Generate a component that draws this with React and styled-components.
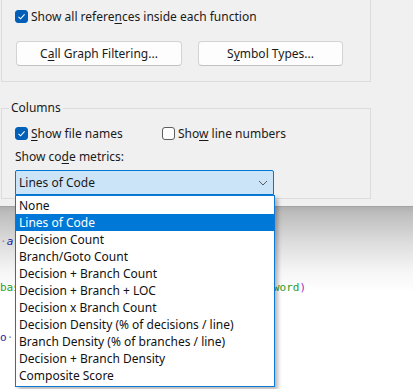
import React from 'react';
import styled, { createGlobalStyle } from 'styled-components';

const GlobalStyle = createGlobalStyle`
  html, body { margin: 0; padding: 0; background: #ffffff; }
  body { font-family: "Noto Sans", "Segoe UI", sans-serif; font-size: 12px; color: #1a1a1a; }
`;

const Page = styled.div`
  position: relative;
  width: 413px;
  height: 389px;
  overflow: hidden;
  display: flex;
  flex-direction: column;
`;

const Dialog = styled.div`
  height: 206px;
  background: #f0f0f0;
  border-bottom: 1px solid #a3a3a3;
  padding-left: 1px;
  display: flex;
  flex-direction: column;
`;

const Group = styled.div`
  position: relative;
  width: 355px;
  border: 1px solid #dcdcdc;
  box-sizing: content-box;
  margin-top: ${p => p.$top}px;
  height: ${p => p.$height}px;
  padding-left: 13px;
`;

const Legend = styled.div`
  position: absolute;
  left: 7px;
  top: -10px;
  padding: 0 2px;
  background: #f0f0f0;
  line-height: 17px;
`;

const CheckRow = styled.div`
  display: flex;
  align-items: center;
  height: 17px;
  margin-top: ${p => p.$top || 0}px;
`;

const CheckItem = styled.label`
  display: flex;
  align-items: center;
  gap: 3px;
  width: ${p => (p.$width ? `${p.$width}px` : 'auto')};
`;

const Box = styled.span`
  width: 13px;
  height: 13px;
  box-sizing: border-box;
  border-radius: 3px;
  display: inline-flex;
  align-items: center;
  justify-content: center;
  background: ${p => (p.$checked ? '#005fb8' : '#fdfdfd')};
  border: 1px solid ${p => (p.$checked ? '#005fb8' : '#5d5d5d')};
`;

const U = styled.span`
  text-decoration: underline;
  text-underline-offset: 2px;
`;

const ButtonRow = styled.div`
  display: flex;
  gap: 16px;
  margin-top: 16px;
  padding-left: 1px;
`;

const Button = styled.div`
  width: ${p => p.$width}px;
  height: 25px;
  box-sizing: border-box;
  background: #fdfdfd;
  border: 1px solid #d3d3d3;
  border-bottom-color: #c2c2c2;
  border-radius: 4px;
  display: flex;
  align-items: center;
  justify-content: center;
`;

const Label = styled.div`
  margin-top: 6px;
  line-height: 17px;
`;

const Combo = styled.div`
  margin-top: 5px;
  width: 259px;
  height: 25px;
  box-sizing: border-box;
  background: #cce4f7;
  border: 1px solid #0078d4;
  border-radius: 2px 2px 0 0;
  display: flex;
  align-items: center;
  justify-content: space-between;
  padding: 0 5px 0 3px;
`;

const Editor = styled.div`
  flex: 1;
  background: linear-gradient(#b0b0b0 0px, #bdbdbd 6px, #dcdcdc 35px, #f6f6f6 65px, #ffffff 85px);
  font-family: "DejaVu Sans Mono", "Liberation Mono", monospace;
  font-size: 11px;
`;

const CodeLine = styled.div`
  position: relative;
  height: 16px;
  line-height: 16px;
  margin-top: ${p => p.$top}px;
  white-space: pre;
`;

const Tok = styled.span`
  color: ${p => p.$c};
  font-style: ${p => (p.$italic ? 'italic' : 'normal')};
`;

const Right = styled.span`
  position: absolute;
  left: ${p => p.$left}px;
`;

const List = styled.div`
  position: absolute;
  left: 15px;
  top: 195px;
  width: 260px;
  box-sizing: border-box;
  background: #ffffff;
  border: 1px solid #0f78d4;
  box-shadow: 3px 3px 4px rgba(0, 0, 0, 0.28);
  padding: 1px 0 2px;
`;

const Item = styled.div`
  height: 17px;
  line-height: 17px;
  padding-left: 3px;
  color: ${p => (p.$selected ? '#ffffff' : '#111111')};
  background: ${p => (p.$selected ? '#0078d7' : 'transparent')};
`;

const Check = () => (
  <svg width="9" height="9" viewBox="0 0 9 9">
    <path d="M1.5 4.8 L3.6 6.8 L7.6 2.4" fill="none" stroke="#ffffff" strokeWidth="1.1" />
  </svg>
);

const Chevron = () => (
  <svg width="10" height="6" viewBox="0 0 10 6">
    <path d="M1 1 L5 5 L9 1" fill="none" stroke="#5a5a5a" strokeWidth="1" />
  </svg>
);

const items = [
  'None',
  'Lines of Code',
  'Decision Count',
  'Branch/Goto Count',
  'Decision + Branch Count',
  'Decision + Branch + LOC',
  'Decision x Branch Count',
  'Decision Density (% of decisions / line)',
  'Branch Density (% of branches / line)',
  'Decision + Branch Density',
  'Composite Score',
];

export default function App() {
  return (
    <Page>
      <GlobalStyle />
      <Dialog>
        <Group $top={-20} $height={100}>
          <CheckRow $top={27}>
            <CheckItem>
              <Box $checked><Check /></Box>
              <span>Show all refere<U>n</U>ces inside each function</span>
            </CheckItem>
          </CheckRow>
          <ButtonRow>
            <Button $width={166}>C<U>a</U>ll Graph Filtering...</Button>
            <Button $width={145}>S<U>y</U>mbol Types...</Button>
          </ButtonRow>
        </Group>
        <Group $top={26} $height={89}>
          <Legend>Columns</Legend>
          <CheckRow $top={16}>
            <CheckItem $width={147}>
              <Box $checked><Check /></Box>
              <span><U>S</U>how file names</span>
            </CheckItem>
            <CheckItem>
              <Box />
              <span>Sho<U>w</U> line numbers</span>
            </CheckItem>
          </CheckRow>
          <Label>Show co<U>d</U>e metrics:</Label>
          <Combo>
            <span>Lines of Code</span>
            <Chevron />
          </Combo>
        </Group>
      </Dialog>
      <Editor>
        <CodeLine $top={27}>
          <Tok $c="#8a8ab0">·</Tok><Tok $c="#1a1aa6" $italic>a</Tok>
        </CodeLine>
        <CodeLine $top={30}>
          <Tok $c="#2a9d2a">bas</Tok>
          <Right $left={273}><Tok $c="#2a9d2a">word</Tok><Tok $c="#a030c0">)</Tok></Right>
        </CodeLine>
        <CodeLine $top={34}>
          <Tok $c="#1a1aa6">o</Tok><Tok $c="#8a8ab0">·</Tok>
        </CodeLine>
      </Editor>
      <List>
        {items.map(t => (
          <Item key={t} $selected={t === 'Lines of Code'}>{t}</Item>
        ))}
      </List>
    </Page>
  );
}
